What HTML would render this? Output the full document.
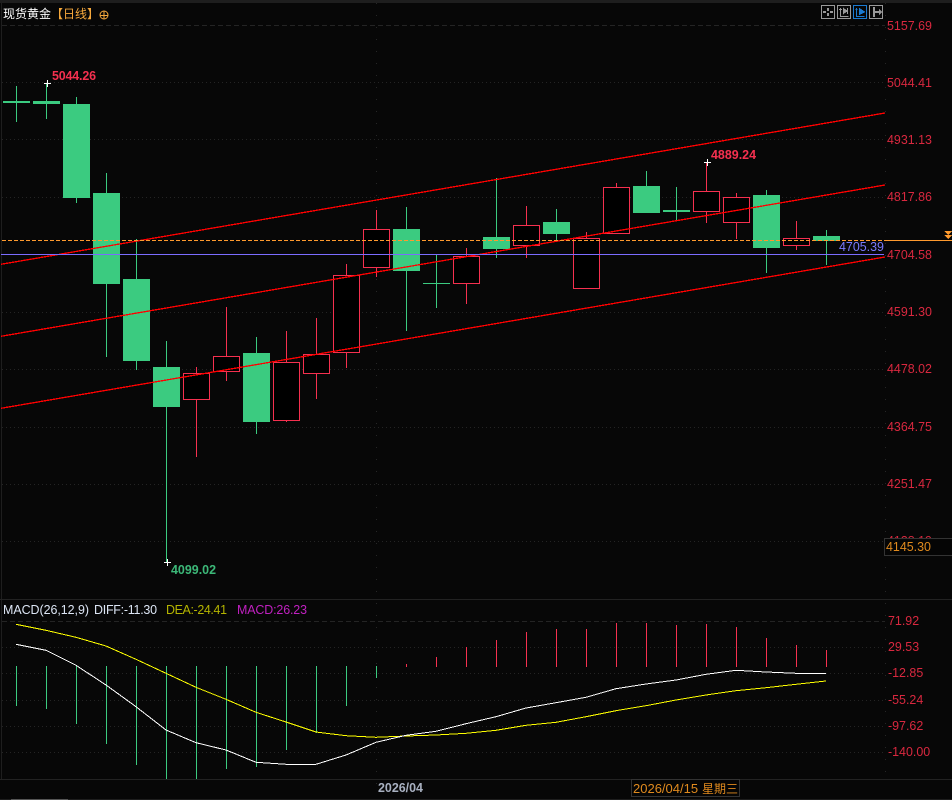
<!DOCTYPE html>
<html>
<head>
<meta charset="utf-8">
<style>
html,body{margin:0;padding:0;background:#070707;width:952px;height:800px;overflow:hidden}
svg{display:block}
text{font-family:"Liberation Sans","WenQuanYi Zen Hei","Noto Sans CJK SC",sans-serif;font-size:12.45px}
.ax{fill:#d9283f}
.b{font-weight:bold}
</style>
</head>
<body>
<svg width="952" height="800" viewBox="0 0 952 800" xmlns="http://www.w3.org/2000/svg">
<rect width="952" height="800" fill="#070707"/>
<g shape-rendering="crispEdges">
<rect x="0" y="0" width="952" height="3" fill="#1e1e1e"/>
<rect x="1" y="3" width="1" height="776" fill="#1e1e1e"/>
<rect x="0" y="599" width="952" height="1" fill="#222"/>
<rect x="0" y="779" width="952" height="1" fill="#222"/>
<rect x="0" y="799" width="952" height="1" fill="#1e1e1e"/>
<rect x="11" y="799" width="57" height="1" fill="#555"/>
<!-- grid -->
<path d="M2 25.5H885M2 621.5H885" stroke="#242424" stroke-dasharray="5 3" fill="none"/>
<path d="M2 82.5H885M2 139.5H885M2 197.5H885M2 312.5H885M2 369.5H885M2 427.5H885M2 484.5H885M2 541.5H885M2 647.5H885M2 673.5H885M2 700.5H885M2 726.5H885M2 752.5H885" stroke="#242424" stroke-dasharray="1 3" fill="none"/>
<path d="M885.5 3V779M376.5 3V785" stroke="#262626" stroke-dasharray="1 11" fill="none"/>
<!-- green wicks -->
<path d="M16.5 86V122M46.5 83V119M76.5 97V203M106.5 173V357M136.5 239V370M166.5 341V562M256.5 337V434M406.5 207V331M436.5 255V308M496.5 178V258M556.5 209V241M646.5 171V186M676.5 187V220M766.5 190V273M826.5 230V265" stroke="#3bcb80" fill="none"/>
<!-- green bodies -->
<g fill="#3bcb80">
<rect x="3" y="101" width="27" height="2"/>
<rect x="33" y="101" width="27" height="3"/>
<rect x="63" y="104" width="27" height="94"/>
<rect x="93" y="193" width="27" height="91"/>
<rect x="123" y="279" width="27" height="82"/>
<rect x="153" y="367" width="27" height="40"/>
<rect x="243" y="353" width="27" height="69"/>
<rect x="393" y="229" width="27" height="42"/>
<rect x="423" y="283" width="27" height="1"/>
<rect x="483" y="237" width="27" height="12"/>
<rect x="543" y="222" width="27" height="12"/>
<rect x="633" y="186" width="27" height="27"/>
<rect x="663" y="210" width="27" height="2"/>
<rect x="753" y="195" width="27" height="53"/>
<rect x="813" y="236" width="27" height="5"/>
</g>
<!-- red wicks -->
<path d="M196.5 367V457M226.5 307V381M286.5 331V422M316.5 318V399M346.5 264V368M376.5 210V277M466.5 248V304M526.5 206V258M586.5 232V239M616.5 183V188M706.5 162V223M736.5 193V239M796.5 221V250" stroke="#f5304f" fill="none"/>
<!-- red hollow bodies -->
<g fill="#000" stroke="#f5304f">
<rect x="183.5" y="373.5" width="26" height="26"/>
<rect x="213.5" y="356.5" width="26" height="15"/>
<rect x="273.5" y="362.5" width="26" height="58"/>
<rect x="303.5" y="354.5" width="26" height="19"/>
<rect x="333.5" y="275.5" width="26" height="77"/>
<rect x="363.5" y="229.5" width="26" height="38"/>
<rect x="453.5" y="256.5" width="26" height="27"/>
<rect x="513.5" y="225.5" width="26" height="20"/>
<rect x="573.5" y="238.5" width="26" height="50"/>
<rect x="603.5" y="187.5" width="26" height="46"/>
<rect x="693.5" y="191.5" width="26" height="20"/>
<rect x="723.5" y="197.5" width="26" height="25"/>
<rect x="783.5" y="238.5" width="26" height="7"/>
</g>
<!-- channel lines -->
<g stroke="#ff0000" stroke-width="1.3" fill="none">
<path d="M1 264.3L885 113"/>
<path d="M1 336.3L885 185"/>
<path d="M1 408.3L885 257"/>
</g>
<!-- level lines -->
<path d="M2 240.5H885" stroke="#ff9a2e" stroke-dasharray="4 2" fill="none"/>
<rect x="885" y="240" width="67" height="1" fill="#ff9a2e"/>
<rect x="1" y="254" width="883" height="1" fill="#7b6cff"/>
<path d="M944 231H952L948 235ZM944 235H952L948 239Z" fill="#ff9a2e"/>
<!-- crosshair marks -->
<path d="M44 83.5H51M47.5 80V87M704 162.5H711M707.5 159V166M164 562.5H171M167.5 559V566" stroke="#fff" fill="none"/>
<!-- MACD histogram -->
<path d="M16.5 666V706M46.5 666V709M76.5 666V724M106.5 666V744M136.5 666V765M166.5 666V779M196.5 666V779M226.5 666V769M256.5 666V767M286.5 666V750M316.5 666V733M346.5 666V706M376.5 666V678" stroke="#3bcb80" fill="none"/>
<path d="M406.5 664V667M436.5 657V667M466.5 647V667M496.5 640V667M526.5 632V667M556.5 629V667M586.5 629V667M616.5 623V667M646.5 623V667M676.5 625V667M706.5 624V667M736.5 627V667M766.5 638V667M796.5 645V667M826.5 650V667" stroke="#f5304f" fill="none"/>
<!-- toolbar icons -->
<g fill="none" stroke="#999">
<rect x="821.5" y="5.5" width="13" height="13"/>
<rect x="837.5" y="5.5" width="13" height="13"/>
<rect x="869.5" y="5.5" width="13" height="13"/>
</g>
<rect x="853.5" y="5.5" width="13" height="13" fill="none" stroke="#1a7ad0"/>
<path d="M827 8h2v3h-2zM827 13h2v3h-2zM823 11h3v2h-3zM830 11h3v2h-3z" fill="#999"/>
<path d="M840.5 8V16.5H848.5" stroke="#999" fill="none"/>
<path d="M839 9.5H842M847.5 8V14M847 11L843.5 8.5V13.5Z" stroke="#999" fill="#999"/>
<path d="M856.5 8V16.5H864.5" stroke="#1a7ad0" fill="none"/>
<path d="M855 9.5H858M859 8L865 12L859 15Z" fill="#1a7ad0" stroke="#1a7ad0" stroke-width=".5"/>
<path d="M873 7h2v10h-2z" fill="#999"/>
<path d="M875 11h4V9l3 3-3 3v-2h-4z" fill="#999"/>
<!-- MACD lines -->
<polyline fill="none" stroke="#ffff00" stroke-width="1" points="16,624.3 46,630.3 76,637.3 106,646 136,659.3 166,673.3 196,687.3 226,699.3 256,712.3 286,722 316,732 346,735.7 376,737.3 406,736 436,735 466,733.3 496,730.3 526,725.3 556,722.3 586,716.7 616,710.7 646,705.7 676,700 706,695 736,690.7 766,687.7 796,684.3 826,681"/>
<polyline fill="none" stroke="#ffffff" stroke-width="1" points="16,644.3 46,650.3 76,665.3 106,685 136,706.7 166,730 196,742.7 226,750 256,762.3 286,764.3 316,764.3 346,755 376,742.3 406,735.3 436,731.3 466,723.7 496,716.7 526,708 556,702.7 586,697.3 616,688.7 646,684 676,680 706,674.3 736,670.3 766,672 796,673.3 826,673.3"/>
</g>
<!-- title -->
<text x="3" y="18" fill="#ffffff" style="font-size:12px">现货黄金</text>
<text x="51" y="18" fill="#f5a83c" style="font-size:12px">【日线】</text>
<circle cx="104" cy="15" r="4" fill="none" stroke="#f5a83c"/>
<path d="M100 15.5H108M104 11V19" stroke="#f5a83c" fill="none" shape-rendering="crispEdges"/>
<!-- axis labels -->
<g class="ax">
<text x="887" y="30" class="ax">5157.69</text>
<text x="887" y="87" class="ax">5044.41</text>
<text x="887" y="144" class="ax">4931.13</text>
<text x="887" y="201" class="ax">4817.86</text>
<text x="887" y="259" class="ax">4704.58</text>
<text x="887" y="316" class="ax">4591.30</text>
<text x="887" y="373" class="ax">4478.02</text>
<text x="887" y="431" class="ax">4364.75</text>
<text x="887" y="488" class="ax">4251.47</text>
<text x="887" y="545" class="ax">4138.19</text>
<text x="888" y="625" class="ax">71.92</text>
<text x="888" y="651" class="ax">29.53</text>
<text x="888" y="677" class="ax">-12.85</text>
<text x="888" y="704" class="ax">-55.24</text>
<text x="888" y="730" class="ax">-97.62</text>
<text x="888" y="756" class="ax">-140.00</text>
</g>
<rect x="884.5" y="538.5" width="68" height="17" fill="#050505" stroke="#333" shape-rendering="crispEdges"/>
<text x="886" y="551" fill="#e08a1e">4145.30</text>
<!-- annotations -->
<text x="52" y="80" fill="#f5304f" class="b" textLength="44">5044.26</text>
<text x="711" y="159" fill="#f5304f" class="b" textLength="45">4889.24</text>
<text x="171" y="574" fill="#3cb878" class="b" textLength="45">4099.02</text>
<text x="839" y="251" fill="#7b7bff">4705.39</text>
<!-- MACD header -->
<text x="3" y="614" fill="#dde6f5" textLength="86">MACD(26,12,9)</text>
<text x="94" y="614" fill="#dde6f5" textLength="63">DIFF:-11.30</text>
<text x="166" y="614" fill="#b4b400" textLength="61">DEA:-24.41</text>
<text x="237" y="614" fill="#c020c0" textLength="70">MACD:26.23</text>
<!-- time axis -->
<text x="378" y="792" fill="#a8b0c0" class="b">2026/04</text>
<rect x="631.5" y="779.5" width="108" height="17" fill="#050505" stroke="#333" shape-rendering="crispEdges"/>
<text x="633" y="793" fill="#e08a1e" style="font-size:13px">2026/04/15</text>
<text x="702" y="793" fill="#e08a1e" style="font-size:12px">星期三</text>
</svg>
</body>
</html>
